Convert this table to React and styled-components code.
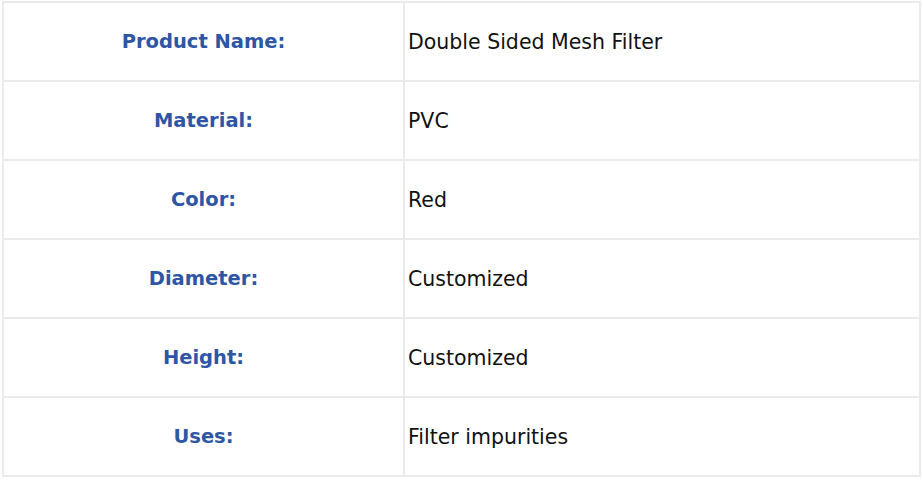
import React from "react";
import styled, { createGlobalStyle } from "styled-components";

const Global = createGlobalStyle`
  body {
    margin: 0;
    background: #fff;
    font-family: "DejaVu Sans", "Noto Sans", sans-serif;
  }
`;

const Wrap = styled.div`
  padding: 1px 0 0 2px;
`;

const Table = styled.table`
  border-collapse: collapse;
  table-layout: fixed;
  width: 919px;
  td {
    border: 2px solid #ebebeb;
    height: 77px;
    padding: 0;
    vertical-align: middle;
  }
`;

const Label = styled.td`
  width: 399px;
  text-align: center;
  color: #2f55a5;
  font-weight: 700;
  font-size: 19.5px;
`;

const Value = styled.td`
  padding-left: 3px !important;
  color: #111;
  font-size: 20.5px;
`;

const rows = [
  ["Product Name:", "Double Sided Mesh Filter"],
  ["Material:", "PVC"],
  ["Color:", "Red"],
  ["Diameter:", "Customized"],
  ["Height:", "Customized"],
  ["Uses:", "Filter impurities"],
];

export default function App() {
  return (
    <Wrap>
      <Global />
      <Table>
        <tbody>
          {rows.map(([k, v]) => (
            <tr key={k}>
              <Label>{k}</Label>
              <Value>{v}</Value>
            </tr>
          ))}
        </tbody>
      </Table>
    </Wrap>
  );
}
